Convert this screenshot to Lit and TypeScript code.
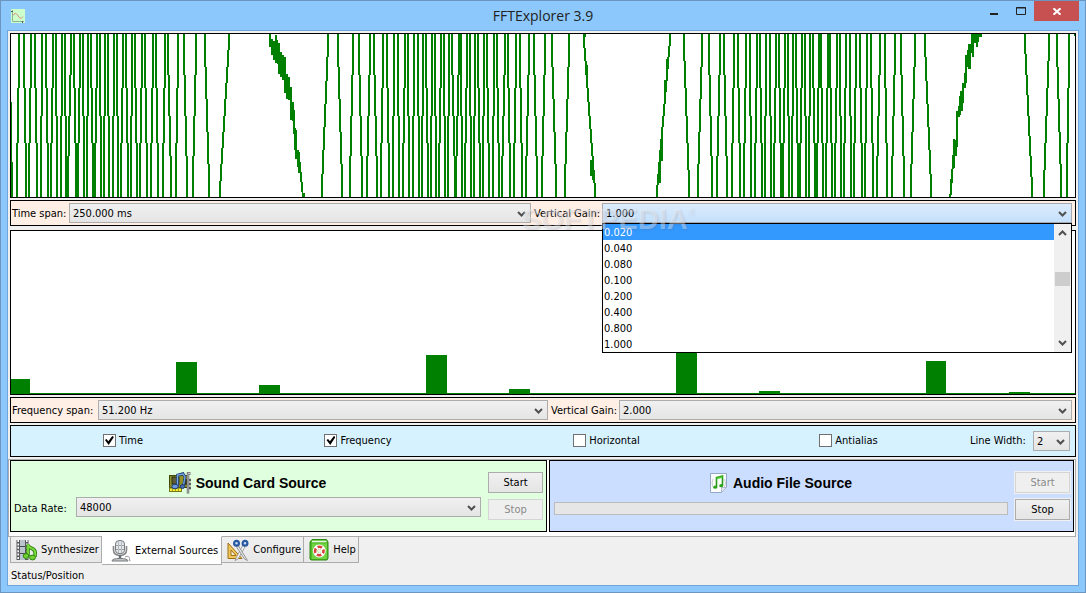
import { LitElement, html, svg, css } from "lit";
import { customElement, property } from "lit/decorators.js";

/* Clipped chirp: each pair is [x at the bottom, x at the top] in thirds of a plot unit. */
const STROKES: number[][] = [
  [50, 58], [77, 71], [87, 93], [111, 105], [123, 127], [143, 138], [153, 158], [171, 167],
  [183, 186], [198, 194], [205, 213], [228, 222], [234, 240], [252, 249], [261, 265], [280, 273],
  [285, 291], [303, 300], [312, 315], [327, 324], [339, 342], [354, 351], [363, 369], [384, 378],
  [393, 397], [411, 405], [420, 426], [441, 435], [453, 459], [474, 468], [489, 495], [513, 505],
  [528, 534], [561, 552], [579, 588], [628, 615], [660, 687], [966, 985], [1026, 1015],
  [1050, 1058], [1086, 1077],
  [1101, 1110], [1130, 1122], [1143, 1150], [1167, 1161], [1179, 1182], [1197, 1194], [1209, 1215],
  [1227, 1224], [1239, 1243], [1257, 1253], [1266, 1269], [1284, 1278], [1293, 1296], [1308, 1305],
  [1317, 1323], [1335, 1332], [1344, 1348], [1364, 1356], [1368, 1376], [1386, 1383], [1395, 1401],
  [1413, 1410], [1422, 1426], [1440, 1434], [1449, 1452], [1467, 1461], [1479, 1483], [1497, 1491],
  [1506, 1515], [1530, 1523], [1542, 1548], [1566, 1560], [1578, 1587], [1611, 1601], [1626, 1635],
  [1668, 1656], [1695, 1707], [1786, 1753], [1971, 2009], [2067, 2052], [2094, 2105], [2135, 2126],
  [2152, 2161],
  [2181, 2173], [2196, 2202], [2220, 2214], [2232, 2238], [2253, 2250], [2265, 2271], [2286, 2280],
  [2295, 2298], [2313, 2310], [2322, 2328], [2343, 2337], [2349, 2355], [2367, 2364], [2376, 2380],
  [2394, 2388], [2400, 2406], [2419, 2415], [2427, 2431], [2446, 2439], [2451, 2457], [2469, 2464],
  [2478, 2484], [2496, 2490], [2505, 2511], [2524, 2519], [2533, 2538], [2553, 2550], [2562, 2569],
  [2586, 2580], [2595, 2601], [2619, 2613], [2631, 2640], [2661, 2655], [2676, 2685], [2712, 2703],
  [2733, 2745], [2793, 2775], [3097, 3074], [3132, 3147], [3184, 3170], [3201, 3208],
];

/* Noisy slopes: [left, right, top, bottom], same thirds. */
const NOISE: number[][] = [
  [807, 813, 100, 140], [813, 819, 117, 165], [819, 825, 122, 180], [825, 831, 105, 190],
  [831, 834, 120, 193], [834, 840, 130, 222], [840, 846, 155, 232], [846, 852, 165, 240],
  [852, 858, 172, 280], [858, 864, 222, 296], [864, 870, 232, 300], [870, 876, 262, 360],
  [876, 882, 305, 362], [879, 885, 330, 402], [882, 888, 384, 450], [885, 891, 390, 478],
  [891, 897, 450, 500], [894, 900, 455, 518], [900, 904, 485, 545], [903, 907, 515, 575],
  [906, 910, 545, 592], [909, 914, 580, 592],
  [1770, 1776, 480, 527], [1776, 1782, 485, 540], [1758, 1763, 195, 245],
  [1977, 1983, 478, 550], [1983, 1989, 380, 484], [1992, 1998, 240, 310], [1998, 2003, 178, 240],
  [1750, 1757, 100, 110],
  [2847, 2853, 582, 592], [2850, 2856, 538, 584], [2853, 2859, 507, 548], [2857, 2863, 465, 508],
  [2860, 2866, 418, 503], [2866, 2872, 420, 467], [2869, 2874, 333, 440], [2874, 2880, 318, 352],
  [2877, 2883, 288, 345], [2880, 2889, 273, 332], [2886, 2892, 250, 308], [2892, 2898, 218, 265],
  [2895, 2901, 165, 250], [2901, 2907, 150, 202], [2904, 2912, 132, 206], [2913, 2919, 100, 158],
  [2916, 2922, 100, 170], [2922, 2928, 100, 128], [2928, 2934, 100, 140], [2934, 2938, 100, 125],
  [2938, 2946, 100, 110], [3222, 3226, 100, 108], [33, 36, 305, 592], [36, 39, 486, 592],
];

/* Spectrum bars: [left, width, height]. */
const BARS: number[][] = [
  [0, 19, 15], [165, 21, 32], [248, 21, 9], [415, 21, 39], [498, 21, 5],
  [665, 21, 46], [748, 21, 3], [915, 20, 33], [998, 21, 2],
];

const GAINS = ["0.020", "0.040", "0.080", "0.100", "0.200", "0.400", "0.800", "1.000"];

/* A stroke drawn without antialiasing: two-unit columns that step sideways one unit at a time. */
function steps(bottom: number, top: number): string {
  const x0 = Math.round(bottom / 3) - 12;
  const x1 = Math.round(top / 3) - 12;
  const n = Math.abs(x1 - x0) + 1;
  const dir = Math.sign(x1 - x0);
  let d = "";
  for (let i = 0; i < n; i++) {
    const from = Math.round(163 - (163 * i) / n);
    const to = Math.round(163 - (163 * (i + 1)) / n);
    d += `M${x0 + dir * i} ${from}h2V${to}h-2z`;
  }
  return d;
}

const chevron = svg`<path d="M1 2 L4.5 5.5 L8 2" fill="none" stroke="#505050" stroke-width="2"/>`;

const icons = {
  app: html`<svg width="14" height="14" viewBox="0 0 14 14">
    <rect width="14" height="14" fill="#ccffcc"/>
    <path d="M1.5 1V12.5H13" fill="none" stroke="#8fb58f"/>
    <path d="M0 2.500h2M11.500 12v2" stroke="#555"/>
    <path d="M2 6.500Q4.500 2.500 6.500 6T10 9.500L12 7.500" fill="none" stroke="#d88a80"/></svg>`,
  card: html`<svg width="22" height="22" viewBox="0 0 22 22">
    <rect x=".5" y="3.500" width="18" height="12" fill="#8f9428" stroke="#45480c"/>
    <rect x="3" y="5" width="7" height="7" fill="#5a5c3a" stroke="#303414"/>
    <rect x="14" y="7" width="4" height="6" fill="#3c3f14"/>
    <rect x=".5" y="16" width="12" height="3.500" fill="#f4ee35" stroke="#77781a"/>
    <path d="M3.500 16v3M6.500 16v3M9.500 16v3" stroke="#a19c1c"/>
    <path d="M8.500 15V3L14 1.500 16 5 14.500 13.500" fill="none" stroke="#1d3a70" stroke-width="2.600"/>
    <path d="M8.500 15V3L14 2 16 5 14.500 13" fill="none" stroke="#79a8e8" stroke-width="1.300"/>
    <ellipse cx="6" cy="14.500" rx="3.200" ry="2.300" fill="#6b98dc" stroke="#1d3a70"/>
    <ellipse cx="13.500" cy="14.500" rx="2.200" ry="2" fill="#486fae" stroke="#1d3a70"/>
    <path d="M21.500 1.500H19v20M20 8h2M20 12h2M20 16h2" fill="none" stroke="#59595d" stroke-width="2.400"/>
    <path d="M21.500 1.500H19v20" fill="none" stroke="#c9c9cf"/></svg>`,
  audio: html`<svg width="18" height="22" viewBox="0 0 18 22">
    <path d="M.5 1.500h16v14l-5 5H.5z" fill="#fbfdfd" stroke="#93a8c9"/>
    <path d="M11.500 20.500v-5h5z" fill="#dfe5ee" stroke="#aebbd0"/>
    <path d="M3 7q-2 4 0 8M14.500 7q2 4 0 8" fill="none" stroke="#c5ccd2"/>
    <path d="M6.500 15V5.500l6-1.500v9.500" fill="none" stroke="#279b18" stroke-width="1.600"/>
    <path d="M6.500 6.500l6-1.500" stroke="#54cf32" stroke-width="1.500"/>
    <ellipse cx="5.200" cy="15.200" rx="2" ry="1.600" fill="#2aa31a"/>
    <ellipse cx="11.200" cy="13.700" rx="2" ry="1.600" fill="#2aa31a"/></svg>`,
  synth: html`<svg width="21" height="22" viewBox="0 0 21 22">
    <rect x=".5" y="1" width="12" height="20" fill="#59595c"/>
    <rect x="4" y="1" width="5" height="20" fill="#b9c4cf"/>
    <path d="M4 7.500h5M4 14.500h5" stroke="#4a4a4d"/>
    <path d="M2.200 1v20M10.800 1v20" stroke="#fff" stroke-width="1.600" stroke-dasharray="2 1.400"/>
    <path d="M12 17V5.500q0 2.500 4 4t3 6.500V18" fill="none" stroke="#2f8310" stroke-width="3.600"/>
    <path d="M12 17V5.500q0 2.500 4 4t3 6.500V18" fill="none" stroke="#7bdc3c" stroke-width="1.800"/>
    <ellipse cx="10" cy="17" rx="2.800" ry="2.400" fill="#70d332" stroke="#2f8310"/>
    <ellipse cx="16.500" cy="18.500" rx="3" ry="2.400" fill="#70d332" stroke="#2f8310"/></svg>`,
  mic: html`<svg width="20" height="22" viewBox="0 0 20 22">
    <path d="M2.500 6v4q0 5 6.500 5.500Q15.500 15 15.500 10V6" fill="none" stroke="#85888b" stroke-width="1.600"/>
    <rect x="4.500" y=".6" width="9" height="13" rx="3.500" fill="#e4e7e9" stroke="#74787c"/>
    <path d="M5 5.500h8M5 9.500h8" stroke="#a0a4a9"/>
    <path d="M7.500 1v12M10.500 1v12" stroke="#b4b8bc"/>
    <path d="M9 15v4" stroke="#6a6d70" stroke-width="2.500"/>
    <path d="M1 21q0-2.500 8-2.500T17 21z" fill="#c8cbcd" stroke="#77797b"/>
    <path d="M14 17q4.500-2 4.500 1.500T19.500 21" fill="none" stroke="#999b9d"/></svg>`,
  tools: html`<svg width="22" height="22" viewBox="0 0 22 22">
    <path d="M1 4v15.500h14z" fill="#efc75e" stroke="#a06e12"/>
    <path d="M4 11v5.500h5z" fill="#f7efda" stroke="#a06e12"/>
    <path d="M16 6l-7 13-1 2.500 3-1.500L18 8z" fill="#f4f4f4" stroke="#8a8a8a" stroke-width=".8"/>
    <path d="M11 6l8 13 1.500 2.500-3-1.500L9.500 8z" fill="#dfe0e0" stroke="#858585" stroke-width=".8"/>
    <circle cx="9.500" cy="4.200" r="2.400" fill="#c9dcf5" stroke="#28589f" stroke-width="2.200"/>
    <circle cx="18" cy="4.200" r="2.400" fill="#c9dcf5" stroke="#28589f" stroke-width="2.200"/></svg>`,
  help: html`<svg width="20" height="22" viewBox="0 0 20 22">
    <path d="M1 3l2-2.500h14.500L19 3v16l-1 2H2l-1-1z" fill="#53ba2a" stroke="#2b8a10"/>
    <path d="M3 2.500h14.500" stroke="#e9f8e0" stroke-width="1.500"/>
    <path d="M3 4.500h15V20H3z" fill="#72d444"/>
    <circle cx="10.300" cy="12" r="4.200" fill="none" stroke="#fff" stroke-width="4.400"/>
    <circle cx="10.300" cy="12" r="4.200" fill="none" stroke="#d8443c" stroke-width="2.600" stroke-dasharray="4.600 1.997" stroke-dashoffset="2.300"/>
    <circle cx="10.300" cy="12" r="2" fill="#eaf7e2"/></svg>`,
};

@customElement("combo-box")
class ComboBox extends LitElement {
  @property() value = "";
  @property() label = "";
  @property({ type: Boolean, reflect: true }) open = false;

  static styles = css`
    :host { display: grid; min-width: 0; }
    select, .arrow { grid-area: 1 / 1; }
    select {
      appearance: none; width: 100%; height: 20px; margin: 0; padding: 1px 20px 0 3px;
      border: 1px solid #acacac; border-radius: 0; color: #000;
      background: linear-gradient(#f0f0f0, #e5e5e5);
      font: 11px/17px "DejaVu Sans Condensed", "DejaVu Sans", sans-serif;
    }
    .arrow { justify-self: end; align-self: center; margin: 2px 5px 0 0; pointer-events: none; }
    :host([open]) select { background: linear-gradient(#dcecfc, #c4e0fc); border-color: #a8a8b0; }
  `;

  render() {
    return html`<select aria-label=${this.label}><option>${this.value}</option></select>
      <svg class="arrow" width="9" height="8" viewBox="0 0 9 8">${chevron}</svg>`;
  }
}

@customElement("app-root")
class AppRoot extends LitElement {
  static styles = css`
    :host {
      display: block; height: 100vh; color: #000;
      font: 11px/14px "DejaVu Sans Condensed", "DejaVu Sans", sans-serif;
    }
    * { box-sizing: border-box; }
    svg { display: block; flex: none; }
    .window {
      display: flex; flex-direction: column; height: 100%; padding: 0 6px 6px;
      background: #8cc8fb; border: 1px solid #6c96c0;
    }
    .titlebar { display: grid; grid-template-columns: 1fr auto 1fr; height: 29px; align-items: center; }
    .app-icon { padding-left: 4px; }
    .title { margin: 0; font: 14px/20px "Open Sans", "Noto Sans", sans-serif; color: #222; }
    .caption { display: flex; justify-content: flex-end; align-self: start; }
    .caption button { height: 20px; width: 27px; padding: 0; border: 0; background: none; display: grid; place-items: center; }
    .caption .close { width: 45px; background: #c75050; }
    .client {
      flex: 1; min-height: 0; display: flex; flex-direction: column; background: #f0f0f0;
      border: 1px solid #6fa5d8; padding: 2px 2px 0;
    }
    .plot { flex: 1 1 0; min-height: 0; background: #fff; border: 1px solid #000; overflow: hidden; }
    .plot svg { width: 100%; height: 100%; }
    .bar {
      display: grid; align-items: center; height: 26px; margin: 2px 0 4px;
      border: 1px solid #000; background: #ffefe5; padding: 0 3px 0 1px;
    }
    .bar > span { padding-top: 2px; }
    .bar.time { grid-template-columns: 57px 462fr 71px 470fr; position: relative; }
    .bar.freq { grid-template-columns: 86px 450fr 71px 453fr; margin-bottom: 2px; }
    .bar .gain { padding-left: 3px; }
    .dropdown {
      position: absolute; z-index: 1; top: 22px; right: 3px; width: calc((100% - 132px) * .5043);
      display: flex; height: 130px; border: 1px solid #000; background: #fff;
    }
    .list { flex: 1; margin: 0; padding: 0; list-style: none; }
    .list li { height: 16px; line-height: 18px; padding-left: 1px; }
    .list li.on { background: #3399ff; color: #fff; }
    .scroll { width: 17px; background: #f0f0f0; display: flex; flex-direction: column; align-items: center; padding: 5px 0; }
    .thumb { width: 15px; height: 14px; margin: 35px 0 auto; background: #cdcdcd; }
    .watermark {
      position: absolute; z-index: 2; left: 48%; top: 2px; pointer-events: none;
      font: bold 29px/32px "Liberation Sans", Arial, sans-serif; color: rgba(255, 255, 255, .35);
      text-shadow: 1px 1px 2px rgba(90, 90, 110, .2);
    }
    .watermark sup { font-size: 9px; line-height: 9px; vertical-align: 14px; font-weight: normal; }
    .options {
      display: grid; grid-template-columns: 224fr 246fr 251fr 233fr 110px; align-items: center;
      height: 32px; border: 1px solid #000; background: #d6f2ff; margin-bottom: 2px; padding-bottom: 1px; flex: none;
    }
    .check { display: flex; align-items: center; justify-content: center; gap: 3px; }
    .check input {
      appearance: none; width: 13px; height: 13px; margin: 0; border: 1px solid #707070; background: #fff;
      display: grid; place-items: center;
    }
    .check input:checked::before {
      content: ""; width: 9px; height: 9px; background: #000;
      clip-path: polygon(0 45%, 18% 32%, 38% 58%, 82% 0, 100% 12%, 42% 100%);
    }
    .width { display: flex; align-items: center; justify-content: space-between; padding: 0 5px; }
    .width combo-box { width: 37px; }
    .panel {
      display: grid; grid-template-columns: 537fr 525fr; gap: 2px; height: 78px; flex: none;
      margin-left: -2px; padding: 0 1px 4px; border: 1px solid #acacac; background: #fff;
    }
    .source {
      display: grid; grid-template: 21px 21px / 1fr 55px; gap: 6px 7px; padding: 11px 3px; border: 1px solid #000;
      align-items: center;
    }
    .source.card { background: #dfffdf; }
    .source.file { background: #ccdeff; padding-left: 4px; }
    .heading {
      display: flex; align-items: center; justify-content: center; gap: 5px; margin: 0;
      font: bold 14px/20px "Liberation Sans", Arial, sans-serif;
    }
    .rate { display: grid; grid-template-columns: 62px 1fr; align-items: center; margin-top: -6px; }
    .rate span { padding-top: 4px; }
    .push {
      height: 21px; padding: 0; border: 1px solid #acacac; background: linear-gradient(#f0f0f0, #e5e5e5);
      font: inherit; color: #000;
    }
    .push:disabled { border-color: #d5d5d5; background: #efefef; color: #8a8a8a; }
    .file .push { box-shadow: 0 0 0 1px #f0f0f0; }
    progress {
      appearance: none; display: block; width: 100%; height: 13px; margin-top: -2px;
      border: 1px solid #bcbcbc; background: #e6e6e6;
    }
    progress::-webkit-progress-bar { background: #e6e6e6; }
    .tabs { display: flex; align-items: flex-start; height: 29px; margin-top: -1px; flex: none; }
    .tab {
      display: flex; align-items: center; gap: 4px; height: 27px; padding: 0 2px 0 5px;
      border: 1px solid #acacac; border-left-width: 0; background: linear-gradient(#f0f0f0, #e8e8e8); font: inherit; color: #000;
    }
    .tab:first-child { border-left-width: 1px; }
    .tab.on { height: 29px; padding: 0 3px 0 9px; background: #fff; border-top-color: #fff; }
    .status { height: 20px; padding: 4px 0 0 1px; flex: none; }
  `;

  private wave() {
    return html`<svg viewBox="0 0 1064 163" preserveAspectRatio="none" shape-rendering="crispEdges" aria-label="Waveform">
      <g fill="#008000">
        ${STROKES.map(([b, t]) => svg`<path d=${steps(b, t)} />`)}
        ${NOISE.map(([l, r, t, b]) => svg`<rect x=${l / 3 - 11} y=${t / 3 - 34} width=${(r - l) / 3} height=${(b - t) / 3} />`)}
      </g>
    </svg>`;
  }

  private spectrum() {
    return html`<svg viewBox="0 0 1064 163" preserveAspectRatio="none" shape-rendering="crispEdges" aria-label="Spectrum">
      <g fill="#008000">
        <rect y="162" width="1064" height="1"/>
        ${BARS.map(([x, w, h]) => svg`<rect x=${x} y=${163 - h} width=${w} height=${h} />`)}
      </g>
    </svg>`;
  }

  private check(text: string, on: boolean) {
    return html`<label class="check"><input type="checkbox" .checked=${on}>${text}</label>`;
  }

  render() {
    return html`
      <div class="window">
        <header class="titlebar">
          <span class="app-icon">${icons.app}</span>
          <h1 class="title">FFTExplorer 3.9</h1>
          <div class="caption">
            <button aria-label="Minimize"><svg width="8" height="8"><rect y="6" width="8" height="2" fill="#222"/></svg></button>
            <button aria-label="Maximize"><svg width="10" height="8"><path d="M.5 .5h9v7h-9zM0 1h10" fill="none" stroke="#222"/></svg></button>
            <button class="close" aria-label="Close"><svg width="8" height="7" viewBox="0 0 8 7"><path d="M.5 .3L7.500 6.700M7.500 .3L.5 6.700" stroke="#fff" stroke-width="2"/></svg></button>
          </div>
        </header>
        <main class="client">
          <div class="plot">${this.wave()}</div>
          <div class="bar time">
            <span>Time span:</span>
            <combo-box label="Time span" value="250.000 ms"></combo-box>
            <span class="gain">Vertical Gain:</span>
            <combo-box label="Vertical Gain" value="1.000" open></combo-box>
            <div class="dropdown">
              <ul class="list" role="listbox" aria-label="Vertical Gain">
                ${GAINS.map((g, i) => html`<li role="option" class=${i === 0 ? "on" : ""}>${g}</li>`)}
              </ul>
              <div class="scroll">
                <svg width="9" height="8" viewBox="0 0 9 8"><path d="M1 6L4.500 2.500L8 6" fill="none" stroke="#505050" stroke-width="2"/></svg>
                <div class="thumb"></div>
                <svg width="9" height="8" viewBox="0 0 9 8">${chevron}</svg>
              </div>
            </div>
            <div class="watermark">SOFTPEDIA<sup>®</sup></div>
          </div>
          <div class="plot">${this.spectrum()}</div>
          <div class="bar freq">
            <span>Frequency span:</span>
            <combo-box label="Frequency span" value="51.200 Hz"></combo-box>
            <span class="gain">Vertical Gain:</span>
            <combo-box label="Vertical Gain" value="2.000"></combo-box>
          </div>
          <div class="options">
            ${this.check("Time", true)} ${this.check("Frequency", true)}
            ${this.check("Horizontal", false)} ${this.check("Antialias", false)}
            <div class="width"><span>Line Width:</span><combo-box label="Line Width" value="2"></combo-box></div>
          </div>
          <div class="panel">
            <section class="source card">
              <h2 class="heading">${icons.card}Sound Card Source</h2>
              <button class="push">Start</button>
              <div class="rate"><span>Data Rate:</span><combo-box label="Data Rate" value="48000"></combo-box></div>
              <button class="push" disabled>Stop</button>
            </section>
            <section class="source file">
              <h2 class="heading">${icons.audio}Audio File Source</h2>
              <button class="push" disabled>Start</button>
              <progress value="0" max="100" aria-label="Playback position"></progress>
              <button class="push">Stop</button>
            </section>
          </div>
          <nav class="tabs" role="tablist">
            <button class="tab" role="tab">${icons.synth}Synthesizer</button>
            <button class="tab on" role="tab" aria-selected="true">${icons.mic}External Sources</button>
            <button class="tab" role="tab">${icons.tools}Configure</button>
            <button class="tab" role="tab">${icons.help}Help</button>
          </nav>
          <footer class="status">Status/Position</footer>
        </main>
      </div>`;
  }
}
